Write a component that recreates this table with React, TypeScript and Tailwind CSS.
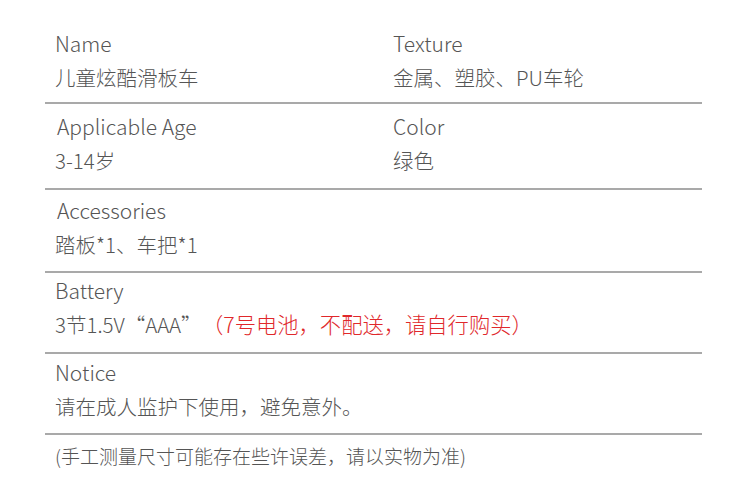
export default function App() {
  const font = { fontFamily: '"Noto Sans CJK SC", "Noto Sans", sans-serif' };
  const label = "text-[21px]";
  return (
    <div className="w-[750px] h-[497px] bg-white text-[#555555] text-[20.5px] font-light leading-[34px]" style={font}>
      <div className="ml-[45px] w-[657px]">
        <div className="grid grid-cols-[338px_1fr] pl-[10px] pt-[26px] pb-[8px] border-b-2 border-[#a9a9a9]">
          <div>
            <div className={label}>Name</div>
            <div>儿童炫酷滑板车</div>
          </div>
          <div>
            <div className={label}>Texture</div>
            <div>金属、塑胶、PU车轮</div>
          </div>
        </div>
        <div className="grid grid-cols-[338px_1fr] pl-[10px] pt-[5px] pb-[11px] border-b-2 border-[#a9a9a9]">
          <div>
            <div className="pl-[2px] text-[21px]">Applicable Age</div>
            <div>3-14岁</div>
          </div>
          <div>
            <div className={label}>Color</div>
            <div>绿色</div>
          </div>
        </div>
        <div className="pl-[10px] pt-[3px] pb-[10px] border-b-2 border-[#a9a9a9]">
          <div className="pl-[2px] text-[21px]">Accessories</div>
          <div>踏板*1、车把*1</div>
        </div>
        <div className="pl-[10px] pt-0 pb-[11px] border-b-2 border-[#a9a9a9]">
          <div className={label}>Battery</div>
          <div>
            3节1.5V“AAA”<span className="ml-[11px] text-[21.3px] text-[#e0282b]">（7号电池，不配送，请自行购买）</span>
          </div>
        </div>
        <div className="pl-[10px] pt-[1px] pb-[10px] border-b-2 border-[#a9a9a9]">
          <div className={label}>Notice</div>
          <div>请在成人监护下使用，避免意外。</div>
        </div>
        <div className="pl-[10px] pt-[4px] text-[19px]">(手工测量尺寸可能存在些许误差，请以实物为准)</div>
      </div>
    </div>
  );
}
